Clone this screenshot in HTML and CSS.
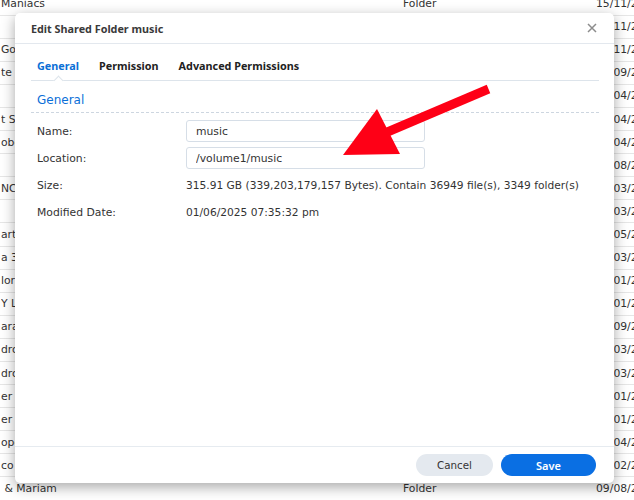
FILE: index.html
```html
<!DOCTYPE html>
<html lang="en">
<head>
    <meta charset="UTF-8">
    <meta name="viewport" content="width=device-width, initial-scale=1.0">
    <title>Edit Shared Folder music</title>
    <link rel="stylesheet" href="styles.css">
</head>
<body>
    <div class="file-list">
        <div class="file-row"><span class="col-name">Maniacs</span><span class="col-type">Folder</span><span class="col-date">15/11/2024</span></div>
        <div class="file-row"><span class="col-name"></span><span class="col-type">Folder</span><span class="col-date">21/11/2024</span></div>
        <div class="file-row"><span class="col-name">God</span><span class="col-type">Folder</span><span class="col-date">16/11/2024</span></div>
        <div class="file-row"><span class="col-name">te</span><span class="col-type">Folder</span><span class="col-date">28/09/2024</span></div>
        <div class="file-row"><span class="col-name"></span><span class="col-type">Folder</span><span class="col-date">12/04/2024</span></div>
        <div class="file-row"><span class="col-name">t Sc</span><span class="col-type">Folder</span><span class="col-date">12/04/2024</span></div>
        <div class="file-row"><span class="col-name">obel</span><span class="col-type">Folder</span><span class="col-date">19/04/2024</span></div>
        <div class="file-row"><span class="col-name"></span><span class="col-type">Folder</span><span class="col-date">30/08/2024</span></div>
        <div class="file-row"><span class="col-name">NC</span><span class="col-type">Folder</span><span class="col-date">07/03/2024</span></div>
        <div class="file-row"><span class="col-name"></span><span class="col-type">Folder</span><span class="col-date">07/03/2024</span></div>
        <div class="file-row"><span class="col-name">art</span><span class="col-type">Folder</span><span class="col-date">22/05/2024</span></div>
        <div class="file-row"><span class="col-name">a 3</span><span class="col-type">Folder</span><span class="col-date">07/03/2024</span></div>
        <div class="file-row"><span class="col-name">lori</span><span class="col-type">Folder</span><span class="col-date">14/01/2025</span></div>
        <div class="file-row"><span class="col-name">Y L</span><span class="col-type">Folder</span><span class="col-date">14/01/2025</span></div>
        <div class="file-row"><span class="col-name">ara</span><span class="col-type">Folder</span><span class="col-date">03/09/2024</span></div>
        <div class="file-row"><span class="col-name">dro</span><span class="col-type">Folder</span><span class="col-date">07/03/2024</span></div>
        <div class="file-row"><span class="col-name">dro</span><span class="col-type">Folder</span><span class="col-date">07/03/2024</span></div>
        <div class="file-row"><span class="col-name">er (</span><span class="col-type">Folder</span><span class="col-date">14/01/2025</span></div>
        <div class="file-row"><span class="col-name">er I</span><span class="col-type">Folder</span><span class="col-date">14/01/2025</span></div>
        <div class="file-row"><span class="col-name">ope</span><span class="col-type">Folder</span><span class="col-date">12/04/2024</span></div>
        <div class="file-row"><span class="col-name">co</span><span class="col-type">Folder</span><span class="col-date">10/02/2025</span></div>
        <div class="file-row"><span class="col-name">&nbsp;&amp; Mariam</span><span class="col-type">Folder</span><span class="col-date">09/08/2024</span></div>
    </div>

    <div class="dialog">
        <div class="dialog-header">
            <span class="dialog-title">Edit Shared Folder music</span>
            <svg class="dialog-close" width="10" height="10" viewBox="0 0 10 10">
                <path d="M1 1 L9 9 M9 1 L1 9" stroke="#8c8c8c" stroke-width="1.5" fill="none"/>
            </svg>
        </div>

        <div class="dialog-tabs">
            <span class="tab active">General</span>
            <span class="tab">Permission</span>
            <span class="tab">Advanced Permissions</span>
        </div>

        <div class="dialog-body">
            <div class="section-title">General</div>

            <div class="form-row">
                <span class="form-label">Name:</span>
                <input class="form-input" type="text" value="music">
            </div>
            <div class="form-row">
                <span class="form-label">Location:</span>
                <input class="form-input" type="text" value="/volume1/music">
            </div>
            <div class="form-row">
                <span class="form-label">Size:</span>
                <span class="form-value">315.91 GB (339,203,179,157 Bytes). Contain 36949 file(s), 3349 folder(s)</span>
            </div>
            <div class="form-row">
                <span class="form-label">Modified Date:</span>
                <span class="form-value">01/06/2025 07:35:32 pm</span>
            </div>
        </div>

        <div class="dialog-footer">
            <button class="dialog-btn cancel">Cancel</button>
            <button class="dialog-btn save">Save</button>
        </div>
    </div>

    <svg class="arrow" width="634" height="500" viewBox="0 0 634 500">
        <line x1="488.5" y1="89" x2="378" y2="136" stroke="#fe0016" stroke-width="9"/>
        <polygon points="343,155 377,109 400,154" fill="#fe0016"/>
    </svg>
</body>
</html>
```

FILE: styles.css
```css
body {
    margin: 0;
    width: 634px;
    height: 500px;
    overflow: hidden;
    position: relative;
    background: #fff;
    font-family: 'DejaVu Sans', Verdana, sans-serif;
    font-size: 10.8px;
    color: #333;
}

.file-list {
    margin-top: -7.5px;
}

.file-row {
    display: grid;
    grid-template-columns: 401px 194px 1fr;
    align-items: center;
    height: 23.1px;
    box-sizing: border-box;
    padding-left: 1px;
    border-bottom: 1px solid #e6e6e6;
    white-space: nowrap;
    overflow: hidden;
}

.col-name,
.col-type,
.col-date {
    overflow: hidden;
}

.col-type {
    padding-left: 1px;
}

.dialog {
    position: absolute;
    left: 15px;
    top: 13px;
    width: 599px;
    height: 470px;
    background: #fff;
    border-radius: 5px;
    box-shadow: 0 4px 14px rgba(0, 0, 0, 0.35);
    display: flex;
    flex-direction: column;
}

.dialog-header {
    display: flex;
    align-items: center;
    justify-content: space-between;
    height: 30px;
    padding: 0 17px 0 16px;
    border-bottom: 1px solid #e3e8ee;
}

.dialog-title {
    font-family: 'Noto Sans', sans-serif;
    font-weight: 700;
    font-size: 10.8px;
    color: #3a3a3a;
}

.dialog-tabs {
    display: flex;
    gap: 20px;
    height: 36px;
    margin: 0 15px 0 16px;
    padding-left: 6px;
    border-bottom: 1px solid #dde4eb;
}

.tab {
    position: relative;
    display: flex;
    align-items: center;
    padding-top: 7px;
    font-family: 'Noto Sans', sans-serif;
    font-weight: 700;
    font-size: 10.8px;
    color: #222;
}

.tab.active {
    color: #0a6fd6;
}

.tab.active::after {
    content: "";
    position: absolute;
    left: 50%;
    bottom: -4px;
    width: 6px;
    height: 6px;
    margin-left: -3px;
    background: #fff;
    border-left: 1px solid #dde4eb;
    border-top: 1px solid #dde4eb;
    transform: rotate(45deg);
}

.dialog-body {
    flex: 1;
    margin: 0 15px 0 16px;
}

.section-title {
    padding: 11px 0 4px 6px;
    line-height: 16px;
    font-size: 12px;
    color: #0b6fd8;
    border-bottom: 1px dashed #cdd6e0;
}

.form-row {
    display: flex;
    align-items: center;
    height: 27px;
    padding-left: 6px;
}

.section-title + .form-row {
    margin-top: 4.5px;
}

.form-label {
    width: 149px;
    flex-shrink: 0;
}

.form-value {
    font-size: 10.65px;
}

.form-input {
    width: 239px;
    height: 22px;
    box-sizing: border-box;
    padding: 0 9px;
    border: 1px solid #d6dee7;
    border-radius: 3px;
    font-family: inherit;
    font-size: 10.8px;
    color: #333;
    outline: none;
}

.dialog-footer {
    display: flex;
    justify-content: flex-end;
    gap: 8px;
    padding: 7px 18px 7px 0;
    border-top: 1px solid #e6ebf0;
}

.dialog-btn {
    height: 22px;
    border: none;
    border-radius: 11px;
    cursor: pointer;
}

.dialog-btn.cancel {
    width: 77px;
    background: #e4e9ef;
    color: #333;
    font-family: 'DejaVu Sans', Verdana, sans-serif;
    font-size: 10.3px;
}

.dialog-btn.save {
    width: 95px;
    background: #0a6fe3;
    color: #fff;
    font-family: 'Noto Sans', sans-serif;
    font-weight: 600;
    font-size: 11px;
}

.arrow {
    position: absolute;
    left: 0;
    top: 0;
    pointer-events: none;
}
```
